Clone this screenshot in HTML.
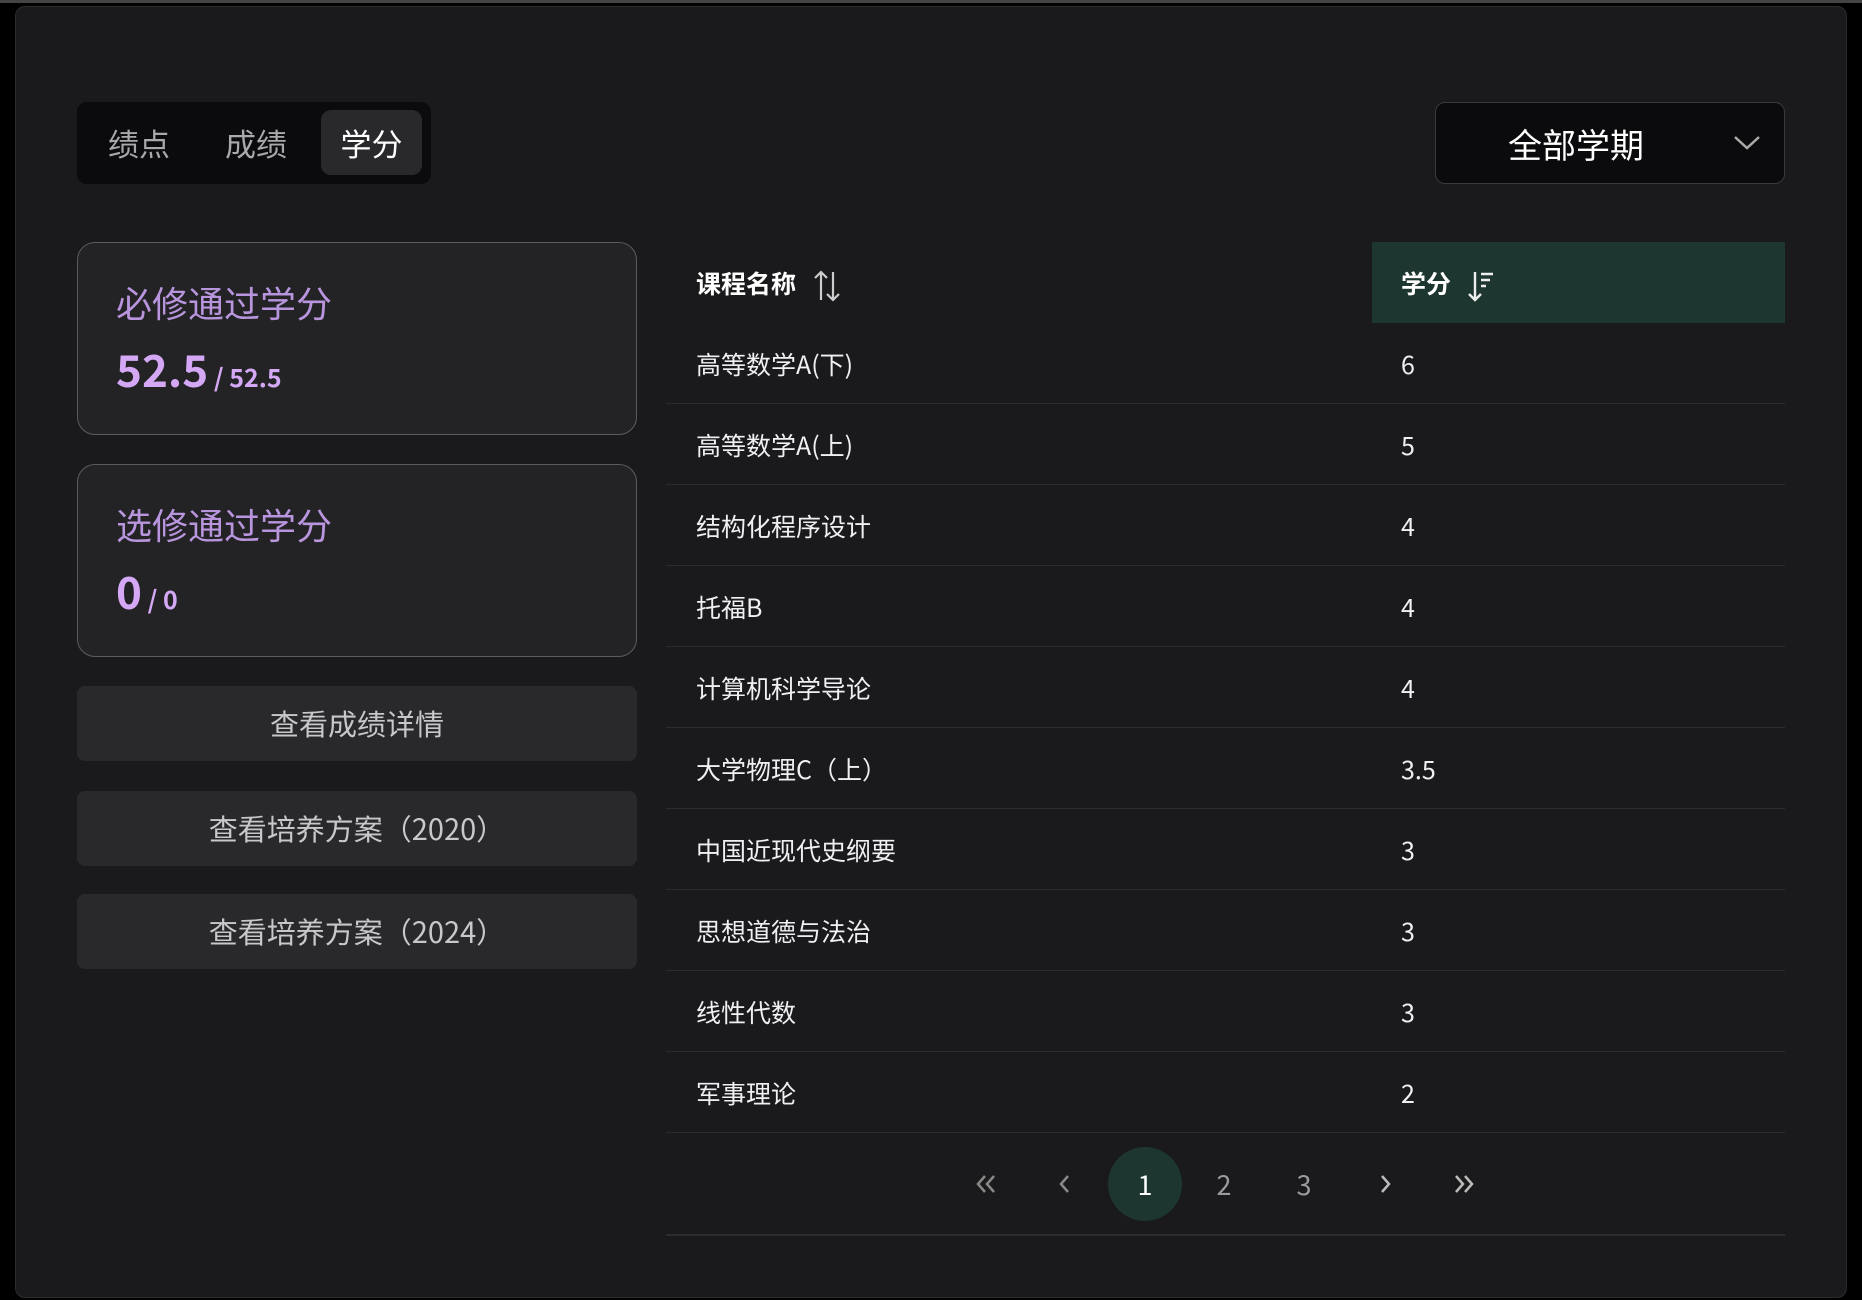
<!DOCTYPE html>
<html><head><meta charset="utf-8"><style>
*{margin:0;padding:0;box-sizing:border-box}
body{width:1862px;height:1300px;background:#000;font-family:"Noto Sans CJK SC","Liberation Sans",sans-serif;position:relative;overflow:hidden;color:#e8e8ea}
.topline{position:absolute;left:0;top:0;width:1862px;height:3px;background:#444}
.panel{position:absolute;left:15px;top:6px;width:1832px;height:1292px;background:#1a1a1c;border:1px solid #2c2c30;border-radius:10px}
.abs{position:absolute}
.tabs{left:77px;top:102px;width:354px;height:82px;background:#0b0b0d;border-radius:10px}
.tab{position:absolute;top:0;height:82px;line-height:82px;font-size:31px;color:#a8a8ad}
.tab.act{background:#29292c;color:#fff;border-radius:10px;top:8px;height:65px;line-height:65px;width:101px;text-align:center}
.dd{left:1435px;top:102px;width:350px;height:82px;background:#0b0b0d;border:1px solid #3a3a3e;border-radius:10px;font-size:34px;color:#fff}
.card{left:77px;width:560px;height:193px;background:#232326;border:1.5px solid #5a5a62;border-radius:18px}
.ct{position:absolute;left:38px;top:34px;font-size:36px;line-height:50px;color:#b995dd}
.cn{position:absolute;left:38px;top:95px;font-size:44px;line-height:60px;font-weight:bold;color:#d4a8f5}
.cn small{font-size:25px;font-weight:bold}
.btn{left:77px;width:560px;height:75px;background:#29292c;border-radius:8px;text-align:center;line-height:75px;font-size:29px;color:#c8c8cc}
.row{position:absolute;left:666px;width:1119px;height:81px;border-bottom:1.5px solid #2c2c30;font-size:25px;color:#f0f0f2}
.row span{position:absolute;top:1px;line-height:81px}
.pg{position:absolute;top:1147px;width:74px;height:74px;line-height:74px;text-align:center;font-size:27px;color:#9a9aa0;margin-left:-37px}
</style></head><body>
<div class="topline"></div>
<div class="panel"></div>
<div class="abs tabs">
<div class="tab" style="left:31px">绩点</div>
<div class="tab" style="left:148px">成绩</div>
<div class="tab act" style="left:244px">学分</div>
</div>
<div class="abs dd"><span style="position:absolute;left:72px;top:16px;line-height:50px">全部学期</span>
<svg style="position:absolute;right:22px;top:30px" width="30" height="20" viewBox="0 0 30 20"><path d="M3 4 L15 15 L27 4" stroke="#aaa" stroke-width="2.5" fill="none"/></svg></div>

<div class="abs card" style="top:242px"><div class="ct">必修通过学分</div><div class="cn">52.5<small> / 52.5</small></div></div>
<div class="abs card" style="top:464px"><div class="ct">选修通过学分</div><div class="cn">0<small> / 0</small></div></div>
<div class="abs btn" style="top:686px">查看成绩详情</div>
<div class="abs btn" style="top:791px">查看培养方案（2020）</div>
<div class="abs btn" style="top:894px">查看培养方案（2024）</div>

<div class="abs" style="left:1372px;top:242px;width:413px;height:81px;background:#1d3630"></div>
<div class="abs" style="left:696px;top:243px;line-height:81px;font-size:25px;font-weight:bold;color:#fff">课程名称
<svg style="vertical-align:middle;margin-left:10px" width="30" height="34" viewBox="0 0 30 34"><path d="M9 31V3M3 9l6-6 6 6M21 3v28M15 25l6 6 6-6" stroke="#ccc" stroke-width="2.2" fill="none"/></svg></div>
<div class="abs" style="left:1401px;top:243px;line-height:81px;font-size:25px;font-weight:bold;color:#fff">学分
<svg style="vertical-align:middle;margin-left:10px" width="30" height="34" viewBox="0 0 30 34"><path d="M8 3v28M2 25l6 6 6-6M14 5h12M14 11h9M14 17h5" stroke="#eee" stroke-width="2.4" fill="none"/></svg></div>

<div class="row" style="top:323px"><span style="left:30px">高等数学A(下)</span><span style="left:735px">6</span></div>
<div class="row" style="top:404px"><span style="left:30px">高等数学A(上)</span><span style="left:735px">5</span></div>
<div class="row" style="top:485px"><span style="left:30px">结构化程序设计</span><span style="left:735px">4</span></div>
<div class="row" style="top:566px"><span style="left:30px">托福B</span><span style="left:735px">4</span></div>
<div class="row" style="top:647px"><span style="left:30px">计算机科学导论</span><span style="left:735px">4</span></div>
<div class="row" style="top:728px"><span style="left:30px">大学物理C（上）</span><span style="left:735px">3.5</span></div>
<div class="row" style="top:809px"><span style="left:30px">中国近现代史纲要</span><span style="left:735px">3</span></div>
<div class="row" style="top:890px"><span style="left:30px">思想道德与法治</span><span style="left:735px">3</span></div>
<div class="row" style="top:971px"><span style="left:30px">线性代数</span><span style="left:735px">3</span></div>
<div class="row" style="top:1052px"><span style="left:30px">军事理论</span><span style="left:735px">2</span></div>

<div class="pg" style="left:986px"><svg width="26" height="22" viewBox="0 0 26 22"><path d="M12 3l-7 8 7 8M21 3l-7 8 7 8" stroke="#888" stroke-width="2.5" fill="none"/></svg></div>
<div class="pg" style="left:1065px"><svg width="16" height="22" viewBox="0 0 16 22"><path d="M11 3l-7 8 7 8" stroke="#888" stroke-width="2.5" fill="none"/></svg></div>
<div class="pg" style="left:1145px;background:#1d3630;border-radius:50%;color:#fff">1</div>
<div class="pg" style="left:1224px">2</div>
<div class="pg" style="left:1304px">3</div>
<div class="pg" style="left:1385px"><svg width="16" height="22" viewBox="0 0 16 22"><path d="M5 3l7 8-7 8" stroke="#bbb" stroke-width="2.5" fill="none"/></svg></div>
<div class="pg" style="left:1464px"><svg width="26" height="22" viewBox="0 0 26 22"><path d="M5 3l7 8-7 8M14 3l7 8-7 8" stroke="#bbb" stroke-width="2.5" fill="none"/></svg></div>
<div class="abs" style="left:666px;top:1234px;width:1119px;height:1.5px;background:#2c2c30"></div>
</body></html>
